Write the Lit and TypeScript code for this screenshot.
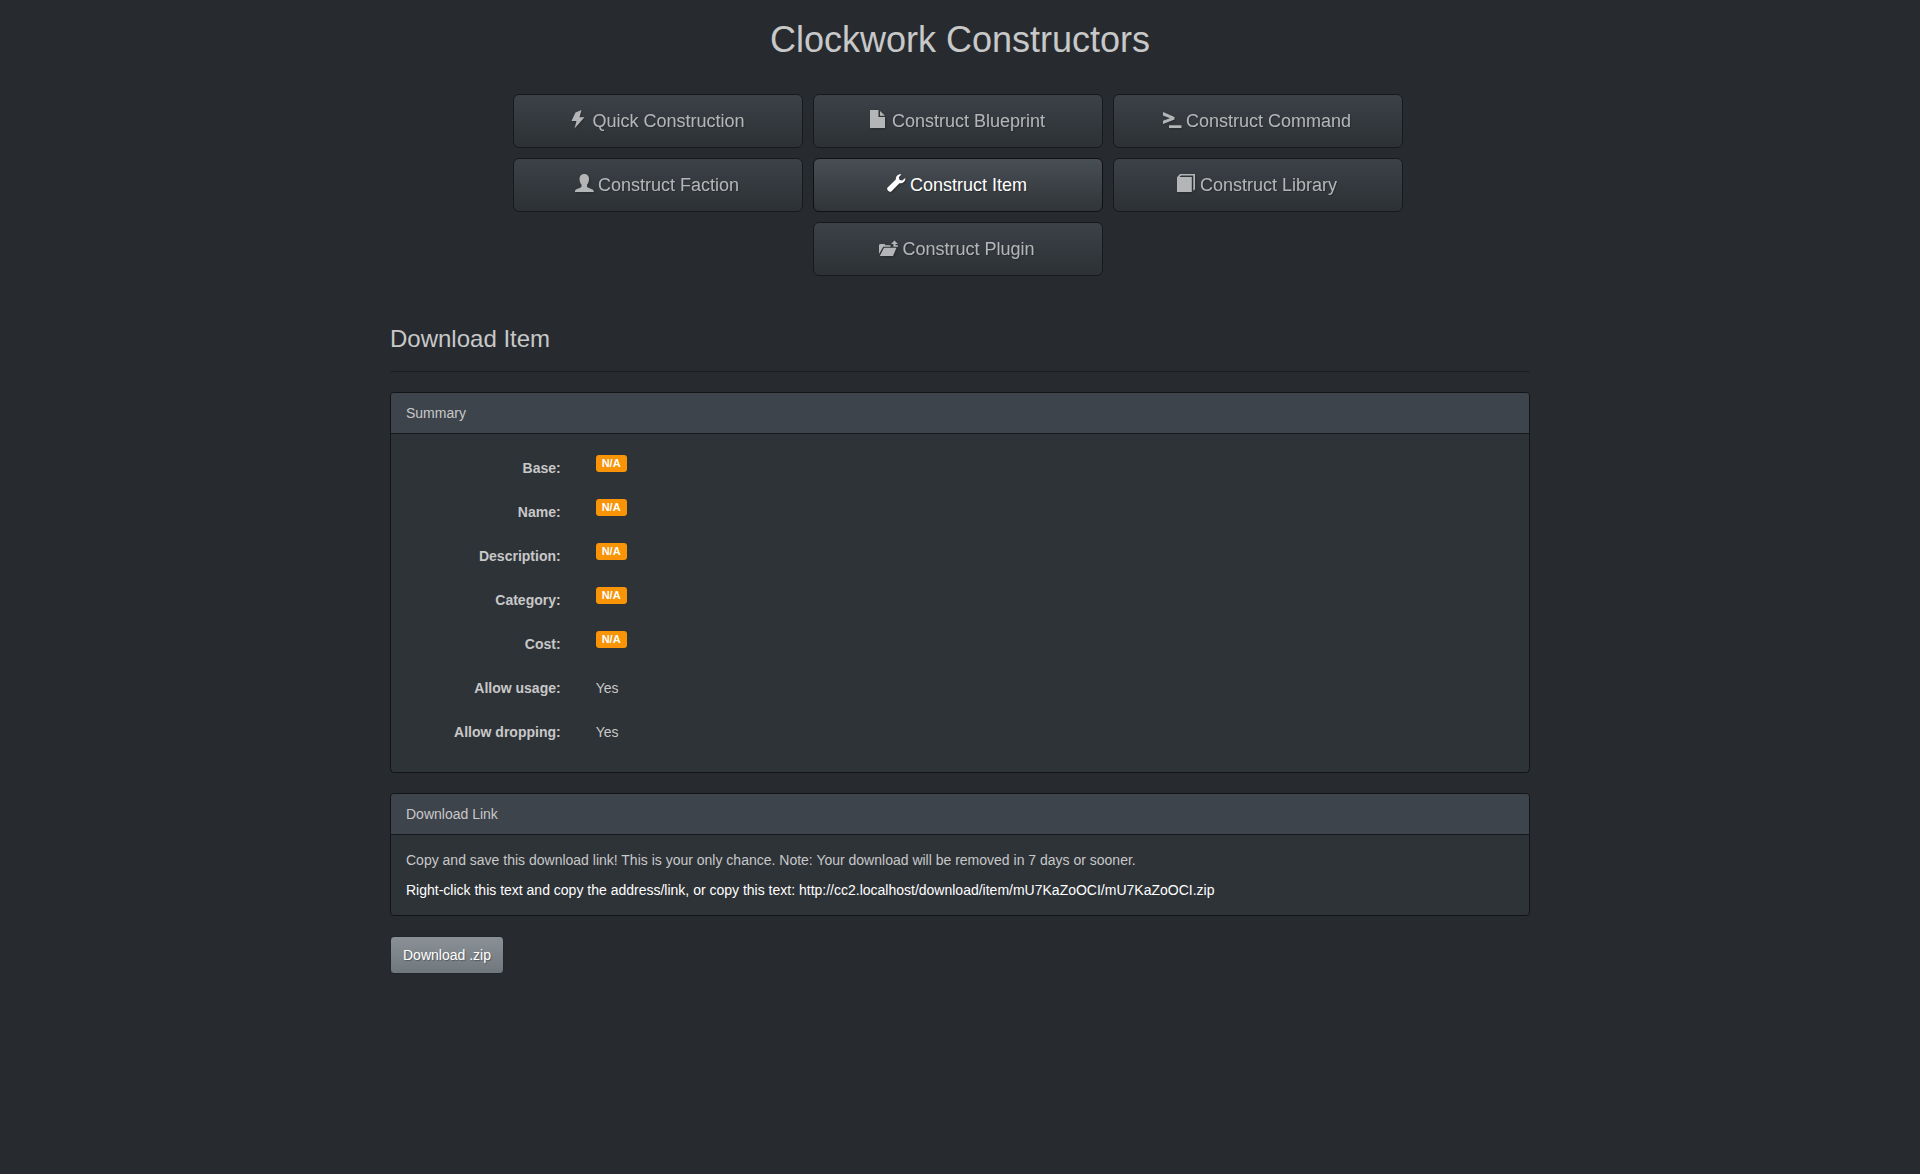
import { LitElement, html, css, svg } from "lit";
import { customElement } from "lit/decorators.js";

const icons = {
  flash: svg`<path d="M12.500 0 6.500 2.500 2.500 11 7.500 11 5.500 18.500 15.500 7.300 10.500 7.300z"/>`,
  file: svg`<path d="M1 0h8.500v7H16v11H1zM11 1l5 4.700h-5z"/>`,
  console: svg`<path d="M0 2l11.500 5v2.500L0 14v-3.200l7-2.500L0 5.500zM6 15.200h12.500v2.800H6z"/>`,
  user: svg`<path d="M4.500 5C4.500 1.800 6.500 0 9.200 0S14 1.800 14 5C14 7.500 13 9.500 12 10.800V12.500Q12 13.200 12.800 13.500L17.500 15.500Q18.700 16 18.700 17V18H0V17Q0 16 1 15.500L5.700 13.500Q6.500 13.200 6.500 12.500V10.800C5.500 9.500 4.500 7.500 4.500 5z"/>`,
  wrench: svg`<path d="M14.500.3C11.200 0 8.600 2.200 8.800 5.600L.6 13.600C-1.200 15.400 2.500 19.200 4.300 17.400L12.400 9.200C15.700 9.700 18.600 7.200 18.300 4L15.300 6.600 12.600 6 11.800 3.200z"/>`,
  book: svg`<path d="M0 3.200 3 0H18V15.300L16.300 16.800V1.500H4L2.500 3H14.800V18H0z"/>`,
  plugin: svg`<path d="M0 16V7L1 6H5.500L6.500 7.200H11.500V8.700H4.300L0 16zM5 9.800H17.500L14 18H.8zM12 6 15.500 2.500 19 6H16.600V7.200H19V8.700H14.400V6z"/>`,
};

const actions = [
  { icon: icons.flash, text: "Quick Construction", active: false },
  { icon: icons.file, text: "Construct Blueprint", active: false },
  { icon: icons.console, text: "Construct Command", active: false },
  { icon: icons.user, text: "Construct Faction", active: false },
  { icon: icons.wrench, text: "Construct Item", active: true },
  { icon: icons.book, text: "Construct Library", active: false },
  { icon: icons.plugin, text: "Construct Plugin", active: false },
];

const summary: [string, string | null][] = [
  ["Base", null],
  ["Name", null],
  ["Description", null],
  ["Category", null],
  ["Cost", null],
  ["Allow usage", "Yes"],
  ["Allow dropping", "Yes"],
];

const url = "http://cc2.localhost/download/item/mU7KaZoOCI/mU7KaZoOCI.zip";

@customElement("app-root")
export class AppRoot extends LitElement {
  static styles = css`
    :host {
      display: block;
      box-sizing: border-box;
      min-height: 100vh;
      background: #272b30;
      color: #c8c8c8;
      font: 14px/20px "Liberation Sans", Arial, sans-serif;
    }
    * {
      box-sizing: border-box;
    }
    .container {
      max-width: 1140px;
      margin: 0 auto;
      padding: 20px 0;
    }
    h1, h2, p, dl, dd {
      margin: 0;
      font-weight: 400;
    }
    h1 {
      font-size: 36px;
      line-height: 40px;
      text-align: center;
    }
    .actions {
      display: flex;
      flex-wrap: wrap;
      justify-content: center;
      gap: 10px;
      padding: 0 124px 0 120px;
      margin: 34px 0 50px;
    }
    .action {
      flex: 0 0 290px;
      display: flex;
      align-items: center;
      justify-content: center;
      gap: 5px;
      height: 54px;
      padding-right: 2px;
      border: 1px solid #0f1113;
      border-radius: 6px;
      background: linear-gradient(#484e55, #3a3f44 60%, #313539);
      color: #fff;
      font-size: 18px;
      line-height: 24px;
      text-decoration: none;
      text-shadow: 1px 1px 1px rgba(0, 0, 0, 0.3);
      opacity: 0.65;
    }
    .action.active {
      opacity: 1;
    }
    .icon {
      width: 18px;
      height: 18px;
      margin-bottom: 4px;
      overflow: visible;
      fill: currentColor;
      filter: drop-shadow(1px 1px 1px rgba(0, 0, 0, 0.3));
    }
    h2 {
      padding-bottom: 19px;
      border-bottom: 1px solid #1c1e22;
      margin-bottom: 20px;
      font-size: 24px;
      line-height: 26px;
    }
    .panel {
      border: 1px solid #121416;
      border-radius: 4px;
      background: #2e3338;
      margin-bottom: 20px;
    }
    .panel-heading {
      padding: 10px 15px;
      border-bottom: 1px solid #16181b;
      border-radius: 3px 3px 0 0;
      background: #3e444c;
    }
    .panel-body {
      padding: 15px;
    }
    .summary {
      padding: 15px 0;
    }
    .row {
      display: grid;
      grid-template-columns: 1fr 5fr;
      margin-bottom: 15px;
    }
    dt {
      padding: 9px 20px 0 15px;
      font-weight: 700;
      text-align: right;
    }
    dd {
      display: flex;
      align-items: flex-start;
      padding: 9px 15px 0;
    }
    dd.missing {
      padding-top: 6px;
    }
    .badge {
      padding: 0 6px;
      border-radius: 3px;
      background: #f89406;
      color: #fff;
      font-size: 11px;
      font-weight: 700;
      line-height: 17px;
    }
    .link {
      display: block;
      margin-top: 10px;
      color: #fff;
      text-decoration: none;
    }
    .download {
      padding: 8px 12px;
      border: 1px solid #23272b;
      border-radius: 4px;
      background: linear-gradient(#8a9196, #7a8288 60%, #70787d);
      color: #fff;
      font: inherit;
      text-shadow: 1px 1px 1px rgba(0, 0, 0, 0.3);
    }
  `;

  render() {
    return html`
      <main class="container">
        <h1>Clockwork Constructors</h1>
        <nav class="actions">
          ${actions.map(
            (a) => html`<a class="action ${a.active ? "active" : ""}" href="#">
              <svg class="icon" viewBox="0 0 18 18" aria-hidden="true">${a.icon}</svg>
              <span>${a.text}</span>
            </a>`
          )}
        </nav>
        <h2>Download Item</h2>
        <section class="panel">
          <div class="panel-heading">Summary</div>
          <dl class="summary">
            ${summary.map(
              ([name, value]) => html`<div class="row">
                <dt>${name}:</dt>
                ${value === null
                  ? html`<dd class="missing"><span class="badge">N/A</span></dd>`
                  : html`<dd>${value}</dd>`}
              </div>`
            )}
          </dl>
        </section>
        <section class="panel">
          <div class="panel-heading">Download Link</div>
          <div class="panel-body">
            <p>Copy and save this download link! This is your only chance. Note: Your download will be removed in 7 days or sooner.</p>
            <a class="link" href=${url}>Right-click this text and copy the address/link, or copy this text: ${url}</a>
          </div>
        </section>
        <button class="download" type="button">Download .zip</button>
      </main>
    `;
  }
}
